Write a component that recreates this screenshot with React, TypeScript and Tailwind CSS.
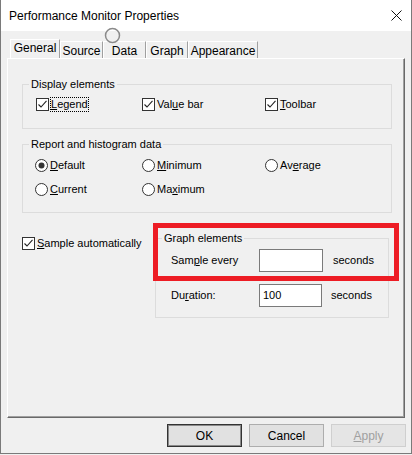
import React from 'react';

const CheckBox: React.FC<{ checked?: boolean }> = ({ checked }) => (
  <span className="w-[13px] h-[13px] border border-[#333] bg-white flex items-center justify-center shrink-0">
    {checked && (
      <svg width="11" height="11" viewBox="0 0 11 11">
        <path d="M1.5 5.5 L4 8 L9.5 1.8" fill="none" stroke="#222" strokeWidth="1.1" />
      </svg>
    )}
  </span>
);

const Radio: React.FC<{ selected?: boolean }> = ({ selected }) => (
  <svg width="13" height="13" viewBox="0 0 13 13" className="shrink-0">
    <circle cx="6.5" cy="6.5" r="6" fill="white" stroke="#333" />
    {selected && <circle cx="6.5" cy="6.5" r="3" fill="#333" />}
  </svg>
);

// label with one underlined access key
const Label: React.FC<{ pre: string; key_: string; post: string; focus?: boolean }> = ({ pre, key_, post, focus }) => (
  <span className={`border leading-[13px] ${focus ? 'border-dotted border-black' : 'border-transparent'}`}>
    {pre}
    <u className="underline-offset-[1px]">{key_}</u>
    {post}
  </span>
);

const Check: React.FC<{ pre: string; k: string; post: string; checked?: boolean; focus?: boolean }> = (p) => (
  <div className="flex items-center gap-[1px] h-[15px]">
    <CheckBox checked={p.checked} />
    <Label pre={p.pre} key_={p.k} post={p.post} focus={p.focus} />
  </div>
);

const RadioItem: React.FC<{ pre: string; k: string; post: string; selected?: boolean }> = (p) => (
  <div className="flex items-center gap-[1px] h-[13px]">
    <Radio selected={p.selected} />
    <Label pre={p.pre} key_={p.k} post={p.post} />
  </div>
);

const tabs = [
  { name: 'General', w: 'w-[50px]', sel: true },
  { name: 'Source', w: 'w-[43px]' },
  { name: 'Data', w: 'w-[43px]' },
  { name: 'Graph', w: 'w-[42px]' },
  { name: 'Appearance', w: 'w-[70px]' },
];

export default function App() {
  return (
    <div className="relative w-[412px] h-[455px] bg-[#f0f0f0] text-[11px] text-black font-[family-name:'Liberation_Sans',Arial,sans-serif]">
      <div className="w-[412px] h-[454px] border-x border-b border-[#7a7a7a] flex flex-col">
        {/* title bar */}
        <div className="h-[31px] bg-white flex items-center justify-between pl-[8px] pr-[9px] shrink-0">
          <span className="text-[12px]">Performance Monitor Properties</span>
          <svg width="11" height="11" viewBox="0 0 11 11">
            <path d="M0.5 0.5 L10.5 10.5 M10.5 0.5 L0.5 10.5" stroke="#111" strokeWidth="1" />
          </svg>
        </div>

        {/* tabs */}
        <div className="mt-[8px] h-[19px] ml-[9px] flex items-end shrink-0">
          {tabs.map((t) => (
            <div
              key={t.name}
              className={`${t.w} flex justify-center border-l border-t border-r border-l-white border-t-white border-r-[#a0a0a0] ${
                t.sel ? 'h-[19px] pt-[2px] text-[12px]' : 'h-[17px] pt-[3px] text-[12px]'
              }`}
            >
              <span className="leading-[12px]">{t.name}</span>
            </div>
          ))}
        </div>

        {/* panel */}
        <div className="ml-[6px] w-[398px] h-[360px] shrink-0 border-l border-t border-l-white border-t-white border-r border-b border-r-[#696969] border-b-[#696969] shadow-[inset_-1px_-1px_0_#a0a0a0]">
          <fieldset className="mt-[19px] ml-[14px] w-[370px] h-[51px] border border-[#dcdcdc]">
            <legend className="ml-[6px] px-[2px] leading-[13px]">Display elements</legend>
            <div className="mt-[6px] pl-[13px] grid grid-cols-[106px_123px_auto]">
              <Check pre="" k="L" post="egend" checked focus />
              <Check pre="Val" k="u" post="e bar" checked />
              <Check pre="" k="T" post="oolbar" checked />
            </div>
          </fieldset>

          <fieldset className="mt-[9px] ml-[14px] w-[370px] h-[75px] border border-[#dcdcdc]">
            <legend className="ml-[6px] px-[2px] leading-[13px]">Report and histogram data</legend>
            <div className="mt-[8px] pl-[12px] grid grid-cols-[107px_123px_auto] gap-y-[11px]">
              <RadioItem pre="" k="D" post="efault" selected />
              <RadioItem pre="" k="M" post="inimum" />
              <RadioItem pre="Av" k="e" post="rage" />
              <RadioItem pre="" k="C" post="urrent" />
              <RadioItem pre="Ma" k="x" post="imum" />
            </div>
          </fieldset>

          <div className="mt-[19px] ml-[14px] grid grid-cols-[133px_234px]">
            <div className="mt-[4px]">
              <Check pre="" k="S" post="ample automatically" checked />
            </div>
            <fieldset className="h-[86px] border border-[#dcdcdc]">
              <legend className="ml-[6px] px-[2px] leading-[13px]">Graph elements</legend>
              <div className="mt-[4px] pl-[15px] flex flex-col gap-[12px]">
                <div className="flex items-center">
                  <span className="w-[88px]">
                    Sam<u>p</u>le every
                  </span>
                  <div className="w-[64px] h-[23px] bg-white border border-[#7a7a7a]" />
                  <span className="ml-[10px]">seconds</span>
                </div>
                <div className="flex items-center">
                  <span className="w-[88px]">
                    Du<u>r</u>ation:
                  </span>
                  <div className="w-[63px] h-[23px] bg-white border border-[#7a7a7a] flex items-center pl-[3px]">100</div>
                  <span className="ml-[9px]">seconds</span>
                </div>
              </div>
            </fieldset>
          </div>
        </div>

        {/* buttons */}
        <div className="mt-[6px] ml-[166px] flex gap-[7px] text-[12px]">
          <button className="w-[75px] h-[23px] bg-[#e1e1e1] border border-[#333] shadow-[inset_0_0_0_1px_#8a8a8a]">OK</button>
          <button className="w-[75px] h-[23px] bg-[#e1e1e1] border border-[#adadad]">Cancel</button>
          <button className="w-[75px] h-[23px] bg-[#e5e5e5] border border-[#cfcfcf] text-[#a0a0a0]">
            <u>A</u>pply
          </button>
        </div>
      </div>

      {/* busy cursor */}
      <svg className="absolute left-[104px] top-[27px]" width="17" height="17" viewBox="0 0 17 17">
        <circle cx="8.5" cy="8.5" r="7" fill="none" stroke="#8a8a8a" strokeWidth="1.5" />
      </svg>

      {/* red annotation box */}
      <div className="absolute left-[153px] top-[223px] w-[246px] h-[58px] border-[5px] border-[#ed1c24]" />
    </div>
  );
}
